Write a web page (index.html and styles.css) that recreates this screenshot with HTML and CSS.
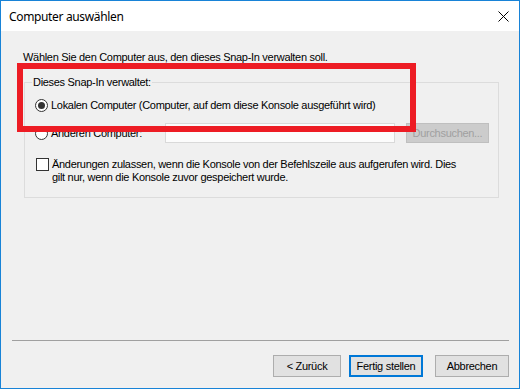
FILE: index.html
```html
<!DOCTYPE html>
<html lang="de">
<head>
<meta charset="utf-8">
<link rel="stylesheet" href="styles.css">
</head>
<body>
<div class="window">
  <div class="titlebar">
    <span class="title">Computer auswählen</span>
    <svg class="close" width="11" height="11" viewBox="0 0 11 11"><path d="M0.5 0.5 L10.5 10.5 M10.5 0.5 L0.5 10.5" stroke="#000" stroke-width="1" fill="none"/></svg>
  </div>
  <div class="body">
    <p class="intro">Wählen Sie den Computer aus, den dieses Snap-In verwalten soll.</p>
    <fieldset class="group">
      <legend class="legend">Dieses Snap-In verwaltet:</legend>
      <div class="row row1">
        <span class="radio checked"></span>
        <span class="label">Lokalen Computer (Computer, auf dem diese Konsole ausgeführt wird)</span>
      </div>
      <div class="row row2">
        <span class="radio"></span>
        <span class="label label2">Anderen Computer:</span>
        <span class="textbox"></span>
        <span class="btn btn-disabled">Durchsuchen...</span>
      </div>
      <div class="row row3">
        <span class="check"></span>
        <span class="label chktext">Änderungen zulassen, wenn die Konsole von der Befehlszeile aus aufgerufen wird. Dies<br>gilt nur, wenn die Konsole zuvor gespeichert wurde.</span>
      </div>
    </fieldset>
    <div class="spacer"></div>
    <div class="sep"></div>
    <div class="buttons">
      <span class="btn btn-back">&lt; Zurück</span>
      <span class="btn btn-default">Fertig stellen</span>
      <span class="btn btn-cancel">Abbrechen</span>
    </div>
  </div>
  <div class="highlight"></div>
</div>
</body>
</html>
```

FILE: styles.css
```css
* { box-sizing: border-box; }
html, body { margin: 0; padding: 0; background: #f0f0f0; }
body { font-family: "Liberation Sans", Arial, sans-serif; font-size: 11px; line-height: 13px; color: #000; letter-spacing: -0.3px; }

.window {
  position: relative;
  width: 520px;
  height: 389px;
  border: 1px solid #1883d7;
  background: #f0f0f0;
  display: flex;
  flex-direction: column;
  overflow: hidden;
}

.titlebar {
  height: 30px;
  background: #fff;
  display: flex;
  align-items: center;
  justify-content: space-between;
  padding: 0 10px 0 8px;
  flex: none;
}
.title { font-family: "Noto Sans", "Open Sans", sans-serif; font-size: 12px; line-height: 16px; padding-top: 1px; letter-spacing: -0.35px; }
.close { display: block; }

.body {
  flex: 1;
  display: flex;
  flex-direction: column;
  padding: 0 10px 11px 0;
}

.intro { margin: 20px 0 0 22px; }

.group {
  margin: 12px 0 0 23px;
  padding: 0 0 0 10px;
  width: 475px;
  height: 122px;
  border: 1px solid #dcdcdc;
  min-width: 0;
}
.legend { padding: 0 1px; margin-left: -3px; }

.row { display: flex; align-items: center; }
.row1 { margin-top: 8px; height: 16px; }
.row2 { margin-top: 10px; height: 20px; }
.row3 { margin-top: 15px; align-items: flex-start; padding-left: 1px; }

.radio {
  width: 13px; height: 13px;
  border: 1px solid #333;
  border-radius: 50%;
  background: #fff;
  display: flex; align-items: center; justify-content: center;
  flex: none;
}
.radio.checked::after {
  content: "";
  width: 7px; height: 7px;
  border-radius: 50%;
  background: #333;
}
.label { margin-left: 3px; }
.label2 { width: 114px; flex: none; }

.textbox {
  width: 230px; height: 20px;
  background: #fcfcfc;
  border: 1px solid #d9d9d9;
  flex: none;
}

.check {
  width: 13px; height: 13px;
  border: 1px solid #333;
  background: #fff;
  flex: none;
}
.chktext { margin-left: 3px; }

.btn {
  display: flex; align-items: center; justify-content: center;
  background: #e1e1e1;
  border: 1px solid #adadad;
  flex: none;
}
.btn-disabled {
  margin-left: 11px;
  width: 83px; height: 20px;
  background: #cccccc;
  border-color: #bfbfbf;
  color: #a0a0a0;
}

.spacer { flex: 1; }
.sep { height: 1px; background: #a0a0a0; margin-left: 11px; }

.buttons {
  display: flex;
  justify-content: flex-end;
  margin-top: 14px;
}
.buttons .btn { height: 22px; }
.btn-back { width: 68px; }
.btn-default { width: 74px; margin-left: 8px; border: 2px solid #0078d7; }
.btn-cancel { width: 74px; margin-left: 12px; }

.highlight {
  position: absolute;
  left: 16px; top: 62px;
  width: 399px; height: 69px;
  border: 6px solid #ed1c24;
}
```
